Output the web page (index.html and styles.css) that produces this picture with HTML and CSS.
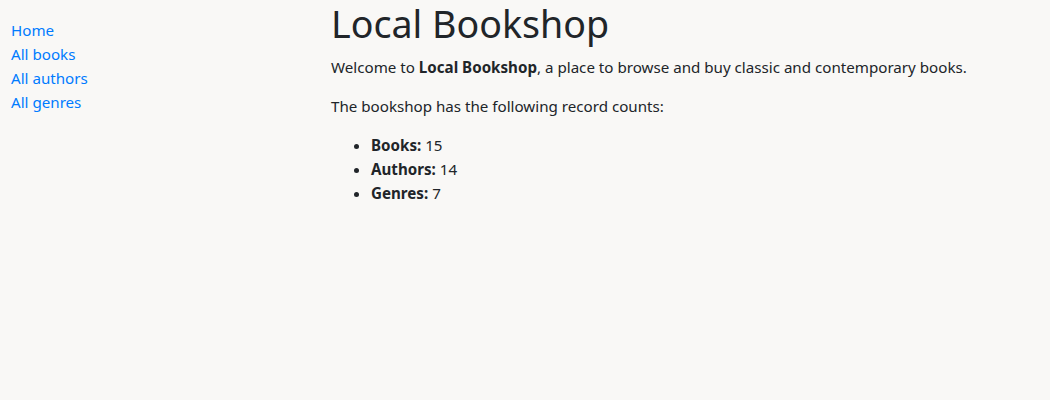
FILE: index.html
```html
<!DOCTYPE html>
<html lang="en">
<head>
<meta charset="utf-8">
<title>Local Bookshop</title>
<link rel="stylesheet" href="styles.css">
</head>
<body>
<div class="layout">
  <nav class="sidebar">
    <ul class="sidebar-nav">
      <li><a href="#">Home</a></li>
      <li><a href="#">All books</a></li>
      <li><a href="#">All authors</a></li>
      <li><a href="#">All genres</a></li>
    </ul>
  </nav>
  <main class="content">
    <h1>Local Bookshop</h1>
    <p>Welcome to <strong>Local Bookshop</strong>, a place to browse and buy classic and contemporary books.</p>
    <p>The bookshop has the following record counts:</p>
    <ul class="counts">
      <li><strong>Books:</strong> 15</li>
      <li><strong>Authors:</strong> 14</li>
      <li><strong>Genres:</strong> 7</li>
    </ul>
  </main>
</div>
</body>
</html>
```

FILE: styles.css
```css
* { box-sizing: border-box; }
html, body {
  margin: 0;
  background: #f9f8f6;
}
body {
  font-family: "Noto Sans", "Open Sans", sans-serif;
  font-size: 15.15px;
  line-height: 24px;
  color: #212529;
}
.layout {
  display: flex;
}
.sidebar {
  width: 320px;
  flex: 0 0 320px;
  padding-left: 11px;
}
.sidebar-nav {
  list-style: none;
  margin: 18px 0 0;
  padding: 0;
}
.sidebar-nav a {
  color: #007bff;
  text-decoration: none;
}
.content {
  flex: 1;
  padding-left: 11px;
}
h1 {
  font-size: 37.6px;
  font-weight: 400;
  line-height: 48px;
  margin: 0 0 7px;
}
p {
  margin: 0 0 15px;
}
strong { font-weight: 700; }
.counts {
  margin: 0;
  padding-left: 40px;
}
```
